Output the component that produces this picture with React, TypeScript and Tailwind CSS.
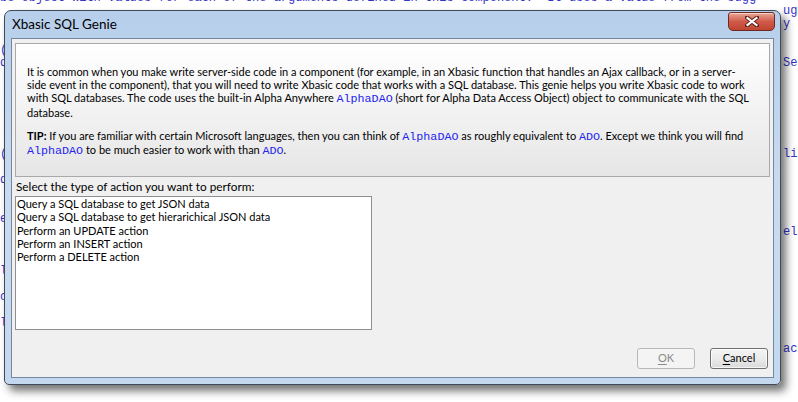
import React from 'react';

// rows of the code editor that peek out around the dialog (left / right edge)
const editorRows: { left?: string; right?: string }[] = [
  {},
  { right: 'ug' },
  { right: 'y' },
  {},
  { left: '(' },
  { right: 'Se', left: 'd' },
  {},
  {},
  {},
  {},
  {},
  {},
  { right: 'li', left: '(' },
  {},
  { left: 'd' },
  {},
  {},
  { left: 'e' },
  { right: 'el' },
  {},
  {},
  { left: 'l' },
  {},
  { left: 'c' },
  {},
  { left: 'l' },
  {},
  { right: 'ac' },
];

const actions = [
  'Query a SQL database to get JSON data',
  'Query a SQL database to get hierarichical JSON data',
  'Perform an UPDATE action',
  'Perform an INSERT action',
  'Perform a DELETE action',
];

const Code = ({ children }: { children: React.ReactNode }) => (
  <span className="font-['Liberation_Mono',monospace] text-[11.7px] leading-none text-[#2424ee]">{children}</span>
);

export default function App() {
  return (
    <div className="relative w-[798px] h-[402px] overflow-hidden bg-white">
      {/* editor behind the dialog */}
      <div className="-mt-[8px] font-['Liberation_Mono',monospace] text-[12px] leading-[13px] text-[#3535c8] whitespace-pre">
        <div>be object with values for each of the arguments defined in this component.  It uses a value from the sugg</div>
        {editorRows.slice(1).map((r, i) => (
          <div key={i} className="h-[13px] flex justify-between">
            <span className="w-[4px] overflow-hidden">{r.left ?? ''}</span>
            <span className="w-[15px] overflow-hidden">{r.right ?? ''}</span>
          </div>
        ))}
      </div>

      {/* dialog window */}
      <div className="absolute left-[4px] top-[10px] w-[777px] h-[375px] rounded-t-[7px] rounded-b-[5px] border border-[#3e4a57] bg-gradient-to-b from-[#b7cfeb] via-[#c9dbf0] to-[#c3d8ef] shadow-[5px_6px_8px_rgba(0,0,0,0.55)] flex flex-col font-['Lato',sans-serif] text-[11px] text-black">
        <div className="h-[27px] flex items-center justify-between pl-[7px] pr-[5px]">
          <span className="text-[13.5px]">Xbasic SQL Genie</span>
          <div className="self-start mt-[1px] w-[47px] h-[19px] rounded-b-[5px] rounded-t-[3px] border border-[#6e2a22] bg-gradient-to-b from-[#e8a596] via-[#d05a4a] to-[#c04432] flex items-center justify-center shadow-[inset_0_1px_0_rgba(255,255,255,0.5)]">
            <svg width="14" height="11" viewBox="0 0 14 11">
              <path d="M2 1.5 L12 9.5 M12 1.5 L2 9.5" stroke="#5b2018" strokeWidth="4" strokeLinecap="square" />
              <path d="M2.5 2 L11.5 9 M11.5 2 L2.5 9" stroke="#ffffff" strokeWidth="2.2" strokeLinecap="square" />
            </svg>
          </div>
        </div>

        <div className="mx-[6px] mb-[6px] flex-1 border border-[#7587a0] bg-[#f0f0f0] flex flex-col">
          <div className="mt-[4px] ml-[3px] w-[755px] h-[134px] border border-[#a9a9a9] bg-gradient-to-b from-white to-[#e6e6e6] pl-[11px] pt-[21px] leading-[13px]">
            <div className="whitespace-nowrap">It is common when you make write server-side code in a component (for example, in an Xbasic function that handles an Ajax callback, or in a server-</div>
            <div className="whitespace-nowrap">side event in the component), that you will need to write Xbasic code that works with a SQL database. This genie helps you write Xbasic code to work</div>
            <div className="whitespace-nowrap">with SQL databases. The code uses the built-in Alpha Anywhere <Code>AlphaDAO</Code> (short for Alpha Data Access Object) object to communicate with the SQL</div>
            <div className="whitespace-nowrap">database.</div>
            <div className="mt-[10px] whitespace-nowrap leading-[14px]">
              <b>TIP:</b> If you are familiar with certain Microsoft languages, then you can think of <Code>AlphaDAO</Code> as roughly equivalent to <Code>ADO</Code>. Except we think you will find
            </div>
            <div className="whitespace-nowrap leading-[13px]">
              <Code>AlphaDAO</Code> to be much easier to work with than <Code>ADO</Code>.
            </div>
          </div>

          <div className="ml-[4px] mt-[3px] leading-[14px] text-[11.8px]">Select the type of action you want to perform:</div>
          <div className="ml-[3px] mt-[2px] w-[357px] h-[134px] border border-[#8e8f8f] bg-white pl-[1px] leading-[13.3px]">
            {actions.map((a) => (
              <div key={a} className="whitespace-nowrap">{a}</div>
            ))}
          </div>

          <div className="mt-[18px] mr-[5px] flex justify-end gap-[15px]">
            <button className="w-[58px] h-[21px] rounded-[3px] border border-[#b5b9bc] bg-[#f4f4f4] text-[#8a8a8a]">
              <span className="underline underline-offset-2">O</span>K
            </button>
            <button className="w-[58px] h-[21px] rounded-[3px] border border-[#707070] bg-gradient-to-b from-[#f4f4f4] via-[#ebebeb] to-[#d9d9d9] shadow-[inset_0_0_0_1px_rgba(255,255,255,0.7)]">
              <span className="underline underline-offset-2">C</span>ancel
            </button>
          </div>
        </div>
      </div>
    </div>
  );
}
